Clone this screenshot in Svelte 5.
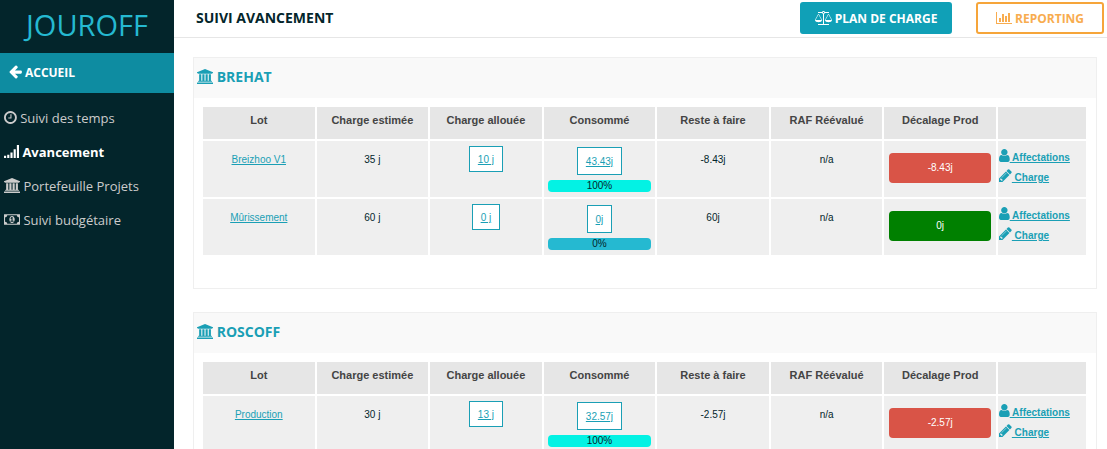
<script lang="ts">
  type Lot = {
    name: string;
    estimated: string;
    allocated: string;
    consumed: string;
    percent: number;
    remaining: string;
    reevaluated: string;
    shift: string;
    late: boolean;
  };

  const columns = [
    'Lot',
    'Charge estimée',
    'Charge allouée',
    'Consommé',
    'Reste à faire',
    'RAF Réévalué',
    'Décalage Prod',
  ];

  const menu = [
    { label: 'Suivi des temps', icon: 'clock', active: false },
    { label: 'Avancement', icon: 'signal', active: true },
    { label: 'Portefeuille Projets', icon: 'bank', active: false },
    { label: 'Suivi budgétaire', icon: 'money', active: false },
  ];

  const projects: { name: string; lots: Lot[] }[] = [
    {
      name: 'BREHAT',
      lots: [
        { name: 'Breizhoo V1', estimated: '35 j', allocated: '10 j', consumed: '43.43j', percent: 100, remaining: '-8.43j', reevaluated: 'n/a', shift: '-8.43j', late: true },
        { name: 'Mûrissement', estimated: '60 j', allocated: '0 j', consumed: '0j', percent: 0, remaining: '60j', reevaluated: 'n/a', shift: '0j', late: false },
      ],
    },
    {
      name: 'ROSCOFF',
      lots: [
        { name: 'Production', estimated: '30 j', allocated: '13 j', consumed: '32.57j', percent: 100, remaining: '-2.57j', reevaluated: 'n/a', shift: '-2.57j', late: true },
      ],
    },
  ];

  // width is the advance of the glyph, every icon is 1792 units high
  const icons: Record<string, { width: number; path: string }> = {
    arrow: {
      width: 1536,
      path: 'M1536 896v128q0 53-32.500 90.500t-84.500 37.500h-704l293 294q38 36 38 90t-38 90l-75 76q-37 37-90 37-52 0-91-37l-651-652q-37-37-37-90 0-52 37-91l651-650q38-38 91-38 52 0 90 38l75 74q38 38 38 91t-38 91l-293 293h704q52 0 84.500 37.500t32.500 90.500z',
    },
    clock: {
      width: 1536,
      path: 'M896 544v448q0 14-9 23t-23 9h-320q-14 0-23-9t-9-23v-64q0-14 9-23t23-9h224v-352q0-14 9-23t23-9h64q14 0 23 9t9 23zm416 352q0-148-73-273t-198-198-273-73-273 73-198 198-73 273 73 273 198 198 273 73 273-73 198-198 73-273zm224 0q0 209-103 385.500t-279.500 279.500-385.500 103-385.500-103-279.500-279.500-103-385.500 103-385.500 279.500-279.500 385.500-103 385.500 103 279.500 279.500 103 385.500z',
    },
    signal: {
      width: 1792,
      path: 'M0 1408h256v256h-256zM384 1280h256v384h-256zM768 1024h256v640h-256zM1152 640h256v1024h-256zM1536 128h256v1536h-256z',
    },
    bank: {
      width: 1920,
      path: 'M960 0l960 384v128h-128q0 26-20.500 45t-48.500 19h-1526q-28 0-48.500-19t-20.500-45h-128v-128zm-704 640h256v768h128v-768h256v768h128v-768h256v768h128v-768h256v768h59q28 0 48.500 19t20.500 45v64h-1664v-64q0-26 20.500-45t48.500-19h59v-768zm1595 960q28 0 48.500 19t20.500 45v128h-1920v-128q0-26 20.500-45t48.500-19h1782z',
    },
    money: {
      width: 1920,
      path: 'M768 1152h384v-96h-128v-448h-114l-148 137 77 80q42-37 55-57h2v288h-128v96zm512-256q0 70-21 142t-59.500 134-101.500 101-138 39-138-39-101.500-101-59.500-134-21-142 21-142 59.500-134 101.500-101 138-39 138 39 101.500 101 59.500 134 21 142zm512 256v-512q-106 0-181-75t-75-181h-1152q0 106-75 181t-181 75v512q106 0 181 75t75 181h1152q0-106 75-181t181-75zm128-832v1152q0 26-19 45t-45 19h-1792q-26 0-45-19t-19-45v-1152q0-26 19-45t45-19h1792q26 0 45 19t19 45z',
    },
    chart: {
      width: 2048,
      path: 'M640 896v512h-256v-512h256zm384-512v1024h-256v-1024h256zm1024 1152v128h-2048v-1536h128v1408h1920zm-640-896v768h-256v-768h256zm384-384v1152h-256v-1152h256z',
    },
    scale: {
      width: 2176,
      path: 'M1728 448l-384 704h768zm-1280 0l-384 704h768zm821-192q-14 40-45.500 71.500t-71.500 45.500v1291h608q14 0 23 9t9 23v64q0 14-9 23t-23 9h-1344q-14 0-23-9t-9-23v-64q0-14 9-23t23-9h608v-1291q-40-14-71.500-45.500t-45.500-71.500h-491q-14 0-23-9t-9-23v-64q0-14 9-23t23-9h491q21-57 70-92.500t111-35.500 111 35.500 70 92.500h491q14 0 23 9t9 23v64q0 14-9 23t-23 9h-491zm-181 16q33 0 56.500-23.500t23.500-56.500-23.500-56.500-56.500-23.500-56.500 23.500-23.500 56.500 23.500 56.500 56.500 23.500zm1088 880q0 73-46.500 131t-117.500 91-144.500 49.500-139.500 16.500-139.500-16.500-144.500-49.500-117.500-91-46.500-131q0-11 35-81t92-174.500 107-195.500 102-184 56-100q18-33 56-33t56 33q4 7 56 100t102 184 107 195.500 92 174.500 35 81zm-1280 0q0 73-46.500 131t-117.500 91-144.500 49.500-139.500 16.500-139.500-16.500-144.500-49.500-117.500-91-46.500-131q0-11 35-81t92-174.500 107-195.500 102-184 56-100q18-33 56-33t56 33q4 7 56 100t102 184 107 195.500 92 174.500 35 81z',
    },
    user: {
      width: 1280,
      path: 'M1280 1399q0 109-62.500 187t-150.500 78h-854q-88 0-150.500-78t-62.500-187q0-85 8.500-160.500t31.500-152 58.500-131 94-89 134.500-34.500q131 128 313 128t313-128q76 0 134.500 34.500t94 89 58.500 131 31.500 152 8.500 160.500zm-256-887q0 159-112.500 271.500t-271.500 112.500-271.500-112.500-112.500-271.500 112.500-271.500 271.500-112.500 271.500 112.500 112.500 271.500z',
    },
    pencil: {
      width: 1536,
      path: 'M363 1536l91-91-235-235-91 91v107h128v128h107zm523-928q0-22-22-22-10 0-17 7l-542 542q-7 7-7 17 0 22 22 22 10 0 17-7l542-542q7-7 7-17zm-54-192l416 416-832 832h-416v-416zm683 96q0 53-37 90l-166 166-416-416 166-165q36-38 90-38 53 0 91 38l235 234q37 39 37 91z',
    },
  };
</script>

{#snippet icon(name: string)}
  <svg class="icon" viewBox="0 0 {icons[name].width} 1792" aria-hidden="true">
    <path d={icons[name].path} />
  </svg>
{/snippet}

<div class="app">
  <aside class="sidebar">
    <div class="brand">JOUROFF</div>
    <a class="home" href="#accueil">{@render icon('arrow')} ACCUEIL</a>
    <nav>
      {#each menu as item}
        <a href="#{item.icon}" class:active={item.active}>{@render icon(item.icon)} {item.label}</a>
      {/each}
    </nav>
  </aside>

  <div class="main">
    <header class="topbar">
      <h1>SUIVI AVANCEMENT</h1>
      <div class="actions">
        <button class="btn btn-plan">{@render icon('scale')} PLAN DE CHARGE</button>
        <button class="btn btn-report">{@render icon('chart')} REPORTING</button>
      </div>
    </header>

    <main>
      {#each projects as project}
        <section class="panel">
          <h2>{@render icon('bank')} {project.name}</h2>
          <div class="panel-body">
            <table>
              <thead>
                <tr>
                  {#each columns as col}
                    <th>{col}</th>
                  {/each}
                  <th class="col-links"></th>
                </tr>
              </thead>
              <tbody>
                {#each project.lots as lot}
                  <tr>
                    <td><a href="#lot">{lot.name}</a></td>
                    <td>{lot.estimated}</td>
                    <td><a class="box" href="#allouee">{lot.allocated}</a></td>
                    <td class="consumed">
                      <a class="box" href="#consomme">{lot.consumed}</a>
                      <div class="progress" class:full={lot.percent >= 100}>{lot.percent}%</div>
                    </td>
                    <td>{lot.remaining}</td>
                    <td>{lot.reevaluated}</td>
                    <td class="shift"><div class="badge" class:late={lot.late}>{lot.shift}</div></td>
                    <td class="links">
                      <a href="#affectations">{@render icon('user')} Affectations</a>
                      <a href="#charge">{@render icon('pencil')} Charge</a>
                    </td>
                  </tr>
                {/each}
              </tbody>
            </table>
          </div>
        </section>
      {/each}
    </main>
  </div>
</div>

<style>
  :global(body) {
    background: #fff;
    overflow: hidden;
  }

  .app {
    display: flex;
    height: 100vh;
    overflow: hidden;
    font-family: 'Open Sans', sans-serif;
    color: #03252b;
  }

  .icon {
    height: 15px;
    width: auto;
    fill: currentColor;
    vertical-align: -2px;
  }

  .sidebar {
    flex: 0 0 174px;
    background: #03252b;
  }

  .brand {
    height: 53px;
    line-height: 50px;
    font-size: 29px;
    font-weight: 400;
    text-align: center;
    color: #25b9d1;
  }

  .home {
    display: block;
    padding: 0 9px;
    line-height: 40px;
    font-size: 12px;
    font-weight: 700;
    color: #fff;
    background: #0e8ca1;
    text-decoration: none;
  }

  nav {
    padding-top: 8px;
  }
  nav a {
    display: block;
    padding: 0 4px;
    line-height: 34px;
    font-size: 13px;
    color: #ccc;
    text-decoration: none;
  }
  nav a.active {
    color: #fff;
    font-weight: 700;
  }

  .main {
    flex: 1;
    min-width: 0;
  }

  .topbar {
    display: flex;
    justify-content: space-between;
    height: 37px;
    padding: 0 3px 0 22px;
    border-bottom: 1px solid #e6e6e6;
  }

  h1 {
    margin: 0;
    line-height: 36px;
    font-size: 14px;
    font-weight: 700;
  }

  .actions {
    display: flex;
    gap: 24px;
    padding-top: 2px;
  }

  .btn {
    height: 32px;
    padding: 0 12px;
    border: 2px solid #10a0b7;
    border-radius: 3px;
    font: 700 12px 'Open Sans', sans-serif;
  }
  .btn .icon {
    height: 14px;
  }
  .btn-plan {
    min-width: 152px;
    background: #10a0b7;
    color: #fff;
  }
  .btn-report {
    min-width: 128px;
    background: #fff;
    border-color: #f6a53a;
    color: #f8ac4f;
  }

  main {
    padding: 19px 10px 0 19px;
  }

  .panel {
    margin-bottom: 23px;
    border: 1px solid #efefef;
  }

  h2 {
    margin: 0;
    padding: 0 3px;
    height: 40px;
    line-height: 38px;
    font-size: 14px;
    font-weight: 700;
    color: #1a9fb5;
    background: #f9f9f9;
  }

  .panel-body {
    padding: 7px 8px 31px 7px;
  }

  table {
    width: 100%;
    table-layout: fixed;
    border-collapse: separate;
    border-spacing: 2px;
    font-family: 'Liberation Sans', Arial, sans-serif;
    font-size: 10px;
  }

  th {
    height: 32px;
    padding: 0 0 6px;
    box-sizing: border-box;
    font-size: 11px;
    font-weight: 700;
    color: #444;
    background: #e6e6e6;
  }
  .col-links {
    width: 88px;
  }

  td {
    padding: 5px 4px;
    line-height: 28px;
    text-align: center;
    vertical-align: top;
    background: #efefef;
  }

  td a {
    color: #1a9fb5;
  }

  .box {
    display: inline-block;
    padding: 1px 8px 0;
    line-height: 23px;
    vertical-align: top;
    background: #fff;
    border: 1px solid #1a9fb5;
  }

  .consumed {
    padding-top: 6px;
  }
  .consumed .box {
    line-height: 25px;
  }

  .progress {
    margin-top: 5px;
    line-height: 12px;
    border-radius: 4px;
    background: #25b9d1;
  }
  .progress.full {
    background: #03f2e4;
  }

  .shift {
    padding: 12px 5px;
  }
  .badge {
    line-height: 30px;
    border-radius: 4px;
    color: #fff;
    background: #008000;
  }
  .badge.late {
    background: #d95447;
  }

  .links {
    padding: 7px 1px 0;
    text-align: left;
  }
  .links a {
    display: block;
    line-height: 20px;
    font-weight: 700;
    white-space: nowrap;
  }
</style>
